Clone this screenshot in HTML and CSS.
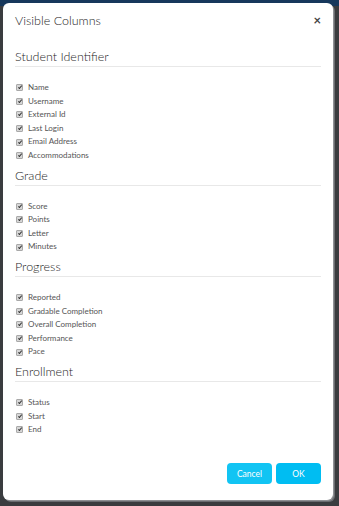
FILE: index.html
```
<!DOCTYPE html>
<html lang="en">
<head>
  <meta charset="UTF-8">
  <meta name="viewport" content="width=device-width, initial-scale=1.0">
  <title>Visible Columns</title>
  <link rel="stylesheet" href="styles.css">
</head>
<body>
  <div class="modal">
    <div class="modal-header">
      <h1 class="modal-title">Visible Columns</h1>
      <span class="close">&times;</span>
    </div>

    <div class="modal-body">
      <div class="group">
        <h2>Student Identifier</h2>
        <ul>
          <li><span class="check"></span>Name</li>
          <li><span class="check"></span>Username</li>
          <li><span class="check"></span>External Id</li>
          <li><span class="check"></span>Last Login</li>
          <li><span class="check"></span>Email Address</li>
          <li><span class="check"></span>Accommodations</li>
        </ul>
      </div>
      <div class="group">
        <h2>Grade</h2>
        <ul>
          <li><span class="check"></span>Score</li>
          <li><span class="check"></span>Points</li>
          <li><span class="check"></span>Letter</li>
          <li><span class="check"></span>Minutes</li>
        </ul>
      </div>
      <div class="group">
        <h2>Progress</h2>
        <ul>
          <li><span class="check"></span>Reported</li>
          <li><span class="check"></span>Gradable Completion</li>
          <li><span class="check"></span>Overall Completion</li>
          <li><span class="check"></span>Performance</li>
          <li><span class="check"></span>Pace</li>
        </ul>
      </div>
      <div class="group">
        <h2>Enrollment</h2>
        <ul>
          <li><span class="check"></span>Status</li>
          <li><span class="check"></span>Start</li>
          <li><span class="check"></span>End</li>
        </ul>
      </div>
    </div>

    <div class="modal-footer">
      <button class="btn btn-cancel">Cancel</button>
      <button class="btn btn-ok">OK</button>
    </div>
  </div>
</body>
</html>
```

FILE: styles.css
```
body {
  margin: 0;
  height: 506px;
  font-family: Lato, "Open Sans", Arial, sans-serif;
  background: linear-gradient(#17385c 0, #17385c 6px, #3a3c3f 6px);
  overflow: hidden;
}
.modal {
  display: flex;
  flex-direction: column;
  width: 330px;
  height: 497px;
  margin: 3px 0 0 3px;
  box-sizing: border-box;
  padding: 10px 12px 16px 12px;
  background-color: #ffffff;
  border-radius: 6px;
  box-shadow: 1px 1px 0 #8e9094, 2px 2px 0 #6a6c70;
  color: #333;
}
.modal-header {
  display: flex;
  justify-content: space-between;
  align-items: flex-start;
}
.modal-title {
  margin: 0;
  font-size: 12.5px;
  font-weight: 300;
  line-height: 16px;
  color: #1e1e1e;
}
.close {
  font-size: 13px;
  font-weight: bold;
  line-height: 12px;
  color: #444;
  margin: 1px 0 0 0;
}
.modal-body {
  flex: 1;
  padding-top: 21px;
}
.group h2 {
  margin: 0;
  font-size: 12.5px;
  font-weight: 300;
  line-height: 14px;
  padding-bottom: 2px;
  border-bottom: 1px solid #e8e8e8;
  color: #1e1e1e;
}
.group ul {
  list-style: none;
  margin: 14px 0 6px 0;
  padding: 0;
}
.group li {
  display: flex;
  align-items: center;
  font-size: 8px;
  line-height: 13.6px;
  color: #555;
}
.check {
  position: relative;
  width: 5px;
  height: 5px;
  margin: 0 5px 0 1px;
  background-color: #d6d6d6;
  border: 0.5px solid #a9a9a9;
  border-radius: 1px;
}
.check::after {
  content: "";
  position: absolute;
  left: 1.5px;
  top: 0;
  width: 1.3px;
  height: 3px;
  border: solid #333;
  border-width: 0 1px 1px 0;
  transform: rotate(40deg);
}
.modal-footer {
  display: flex;
  justify-content: flex-end;
  gap: 4px;
}
.btn {
  width: 45px;
  height: 21px;
  border: none;
  border-radius: 4px;
  color: white;
  font-family: Lato, "Open Sans", Arial, sans-serif;
  font-size: 8.5px;
  cursor: pointer;
}
.btn-cancel {
  background-color: #12c4f3;
}
.btn-ok {
  background-color: #00bdf2;
}
```
